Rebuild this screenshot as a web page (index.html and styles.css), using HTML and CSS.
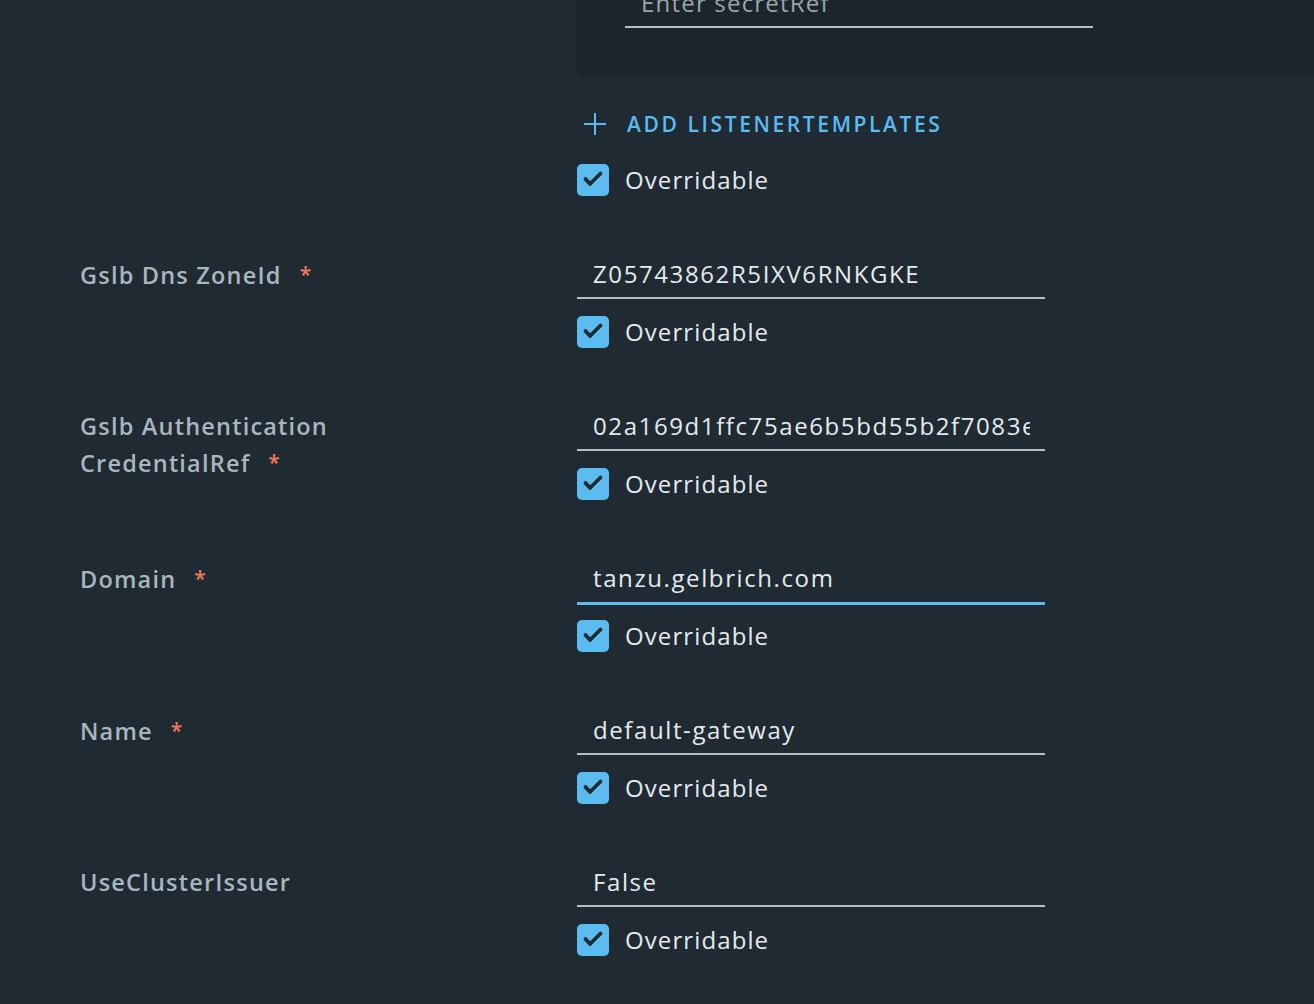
FILE: index.html
```html
<!DOCTYPE html>
<html>
<head>
<meta charset="utf-8">
<link rel="stylesheet" href="styles.css">
</head>
<body>
<div class="form">
  <div class="row row-top">
    <div class="label"></div>
    <div class="field">
      <div class="card">
        <div class="input placeholder">Enter secretRef</div>
      </div>
      <div class="add">
        <svg class="plus" width="24" height="24" viewBox="0 0 24 24"><path d="M12 1V23M1 12H23" stroke="#5bbcf0" stroke-width="2" fill="none"/></svg>
        <span>ADD LISTENERTEMPLATES</span>
      </div>
      <div class="check"><span class="box"><svg width="32" height="32" viewBox="0 0 32 32"><path d="M8.5 15L13 20L23.5 9.5" stroke="#1f2a33" stroke-width="3.8" fill="none" stroke-linecap="round" stroke-linejoin="round"/></svg></span><span>Overridable</span></div>
    </div>
  </div>

  <div class="row">
    <div class="label"><span>Gslb Dns ZoneId</span><span class="req">*</span></div>
    <div class="field">
      <div class="input">Z05743862R5IXV6RNKGKE</div>
      <div class="check"><span class="box"><svg width="32" height="32" viewBox="0 0 32 32"><path d="M8.5 15L13 20L23.5 9.5" stroke="#1f2a33" stroke-width="3.8" fill="none" stroke-linecap="round" stroke-linejoin="round"/></svg></span><span>Overridable</span></div>
    </div>
  </div>

  <div class="row">
    <div class="label"><span>Gslb Authentication CredentialRef</span><span class="req">*</span></div>
    <div class="field">
      <div class="input"><span class="clip">02a169d1ffc75ae6b5bd55b2f7083e4c</span></div>
      <div class="check"><span class="box"><svg width="32" height="32" viewBox="0 0 32 32"><path d="M8.5 15L13 20L23.5 9.5" stroke="#1f2a33" stroke-width="3.8" fill="none" stroke-linecap="round" stroke-linejoin="round"/></svg></span><span>Overridable</span></div>
    </div>
  </div>

  <div class="row">
    <div class="label"><span>Domain</span><span class="req">*</span></div>
    <div class="field">
      <div class="input focus">tanzu.gelbrich.com</div>
      <div class="check"><span class="box"><svg width="32" height="32" viewBox="0 0 32 32"><path d="M8.5 15L13 20L23.5 9.5" stroke="#1f2a33" stroke-width="3.8" fill="none" stroke-linecap="round" stroke-linejoin="round"/></svg></span><span>Overridable</span></div>
    </div>
  </div>

  <div class="row">
    <div class="label"><span>Name</span><span class="req">*</span></div>
    <div class="field">
      <div class="input">default-gateway</div>
      <div class="check"><span class="box"><svg width="32" height="32" viewBox="0 0 32 32"><path d="M8.5 15L13 20L23.5 9.5" stroke="#1f2a33" stroke-width="3.8" fill="none" stroke-linecap="round" stroke-linejoin="round"/></svg></span><span>Overridable</span></div>
    </div>
  </div>

  <div class="row">
    <div class="label"><span>UseClusterIssuer</span></div>
    <div class="field">
      <div class="input">False</div>
      <div class="check"><span class="box"><svg width="32" height="32" viewBox="0 0 32 32"><path d="M8.5 15L13 20L23.5 9.5" stroke="#1f2a33" stroke-width="3.8" fill="none" stroke-linecap="round" stroke-linejoin="round"/></svg></span><span>Overridable</span></div>
    </div>
  </div>
</div>
</body>
</html>
```

FILE: styles.css
```css
html, body {
  margin: 0;
  padding: 0;
  background: #1f2a33;
  overflow: hidden;
  height: 1004px;
}
body {
  font-family: "Open Sans", "Noto Sans", sans-serif;
  color: #e6eaed;
}
.form {
  margin-top: -40px;
}
.row {
  display: grid;
  grid-template-columns: 497px 468px;
  padding-left: 80px;
  margin-bottom: 55px;
}
.label {
  padding-top: 5px;
  font-size: 23.5px;
  font-weight: 600;
  line-height: 36px;
  letter-spacing: 1.2px;
  color: #a9b6be;
  width: 300px;
}
.req {
  color: #f0785c;
  margin-left: 18px;
  font-size: 21px;
  letter-spacing: 0;
  vertical-align: 2px;
}
.field {
  display: flex;
  flex-direction: column;
  align-items: flex-start;
}
.input {
  box-sizing: border-box;
  width: 468px;
  height: 48px;
  padding-left: 16px;
  font-size: 24px;
  letter-spacing: 1.6px;
  line-height: 46px;
  border-bottom: 2px solid #b4c0c6;
  white-space: nowrap;
  overflow: hidden;
}
.clip {
  display: block;
  width: 437px;
  overflow: hidden;
}
.input.focus {
  border-bottom: 3px solid #5bbcf0;
  height: 50px;
  line-height: 46px;
  margin-bottom: -2px;
}
.placeholder {
  color: #9aa6ad;
  letter-spacing: 1.2px;
}
.card {
  box-sizing: border-box;
  width: 780px;
  padding: 20px 0 47px 48px;
  background: #1b252c;
  border-radius: 6px;
}
.add {
  display: flex;
  align-items: center;
  height: 48px;
  margin-top: 25px;
  color: #5bbcf0;
  font-size: 21px;
  font-weight: 600;
  letter-spacing: 2.6px;
}
.plus {
  margin-left: 6px;
  margin-right: 20px;
}
.check {
  display: flex;
  align-items: center;
  margin-top: 16px;
  font-size: 24px;
  letter-spacing: 1.1px;
  line-height: 32px;
  color: #e6eaed;
}
.row .input + .check {
  margin-top: 17px;
}
.box {
  width: 32px;
  height: 32px;
  border-radius: 5px;
  background: #5bbcf0;
  margin-right: 16px;
  display: block;
}
.box svg {
  display: block;
}
```
